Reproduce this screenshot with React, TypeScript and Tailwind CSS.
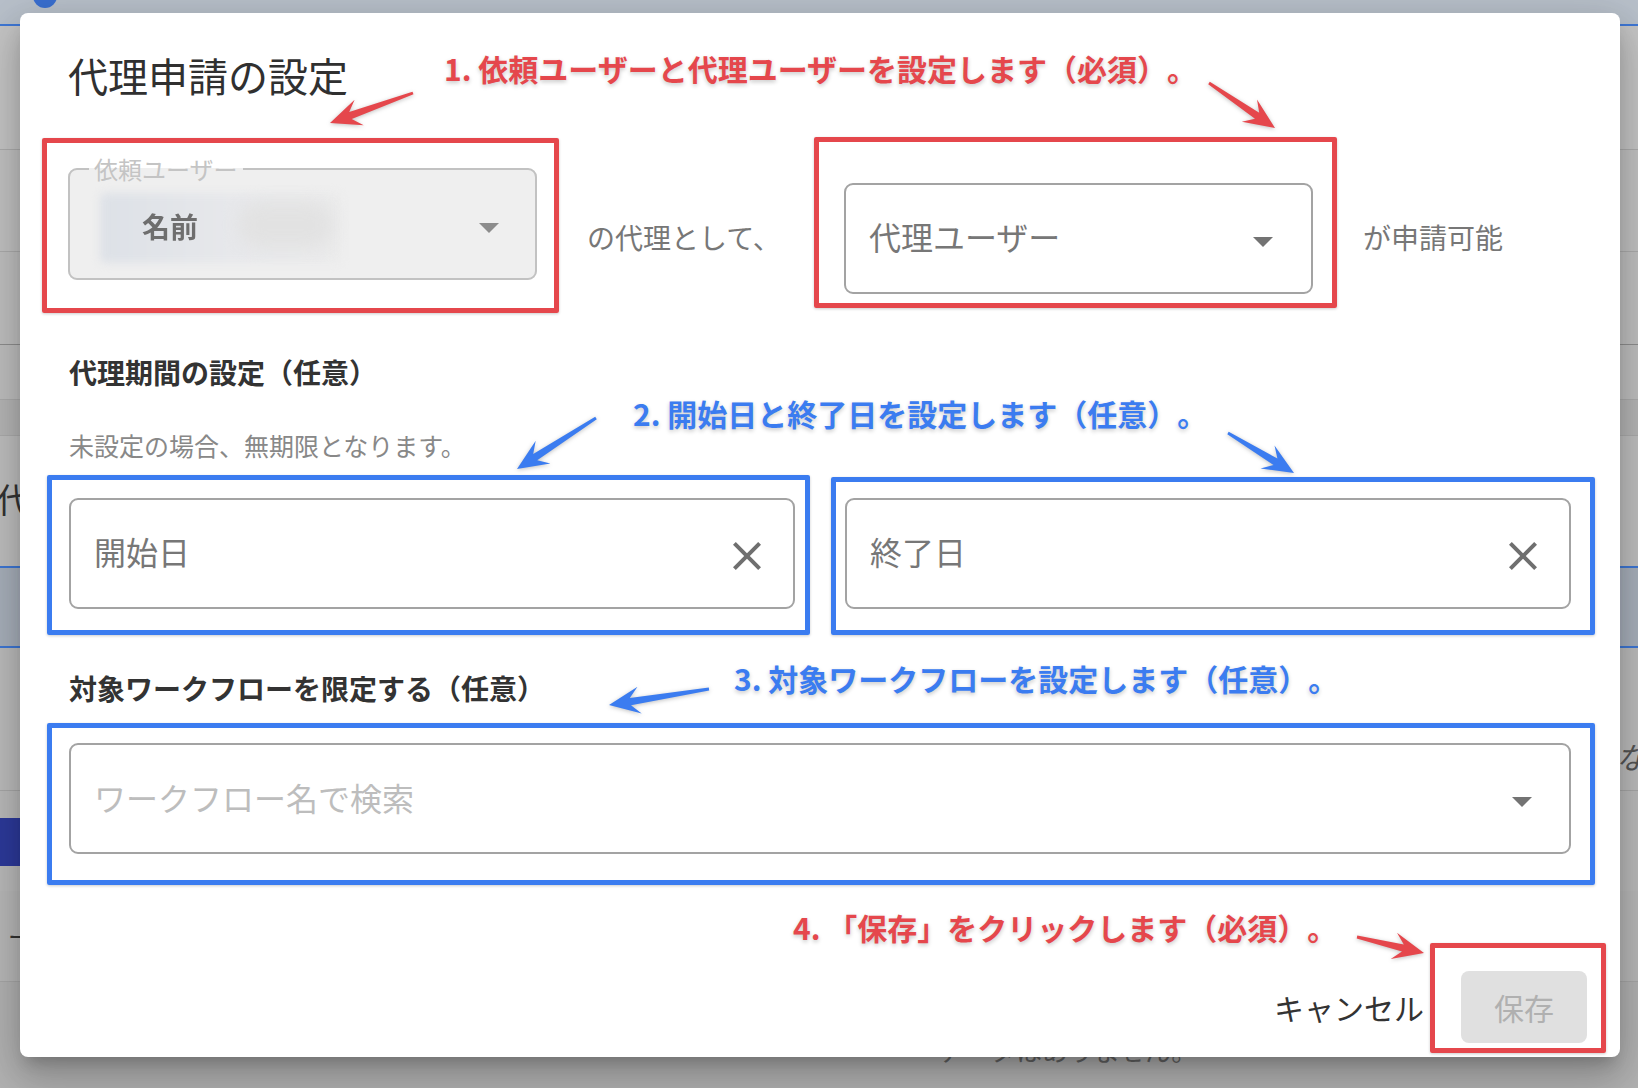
import React from "react";

function arrowPoints(x1: number, y1: number, x2: number, y2: number, headLen = 31, headHalf = 13.5, tailHalf = 1.4, neckHalf = 3.7) {
  const dx = x2 - x1, dy = y2 - y1;
  const L = Math.hypot(dx, dy);
  const ux = dx / L, uy = dy / L;
  const px = -uy, py = ux;
  const nb = headLen * 0.7;
  const nX = x2 - ux * nb, nY = y2 - uy * nb;
  const bX = x2 - ux * headLen, bY = y2 - uy * headLen;
  const pts = [
    [x1 + px * tailHalf, y1 + py * tailHalf],
    [nX + px * neckHalf, nY + py * neckHalf],
    [bX + px * headHalf, bY + py * headHalf],
    [x2, y2],
    [bX - px * headHalf, bY - py * headHalf],
    [nX - px * neckHalf, nY - py * neckHalf],
    [x1 - px * tailHalf, y1 - py * tailHalf],
  ];
  return pts.map((p) => p.map((v) => v.toFixed(1)).join(",")).join(" ");
}

const RED = "#e5474c";
const BLUE = "#3b7cf0";

function DropArrow({ color }: { color: string }) {
  return (
    <svg width="20" height="10" viewBox="0 0 20 10" className="shrink-0 mt-[6px]">
      <path d="M0 0h20L10 10z" fill={color} />
    </svg>
  );
}

function CloseIcon() {
  return (
    <svg width="48" height="48" viewBox="0 0 24 24" className="shrink-0 mt-[5px]">
      <path
        fill="#6f6f6f"
        d="M19 6.41L17.59 5 12 10.59 6.41 5 5 6.41 10.59 12 5 17.59 6.41 19 12 13.41 17.59 19 19 17.59 13.41 12z"
      />
    </svg>
  );
}

function RequesterSelect() {
  return (
    <div className="relative w-[469px] h-[111px] shrink-0">
      <fieldset className="absolute left-0 right-0 top-[-12px] bottom-0 m-0 rounded-[9px] border-2 border-[#c2c2c2] bg-[#efefef] px-[19px]">
        <legend className="px-[5px] text-[24px] leading-[24px] text-[#c4c4c4]">依頼ユーザー</legend>
      </fieldset>
      <div className="absolute left-[32px] top-[24px] w-[241px] h-[70px] rounded-[6px] bg-[linear-gradient(90deg,#dde1e7,#e7e8eb_55%,#ebebeb)] blur-[4px]" />
      <div className="absolute left-[170px] top-[34px] w-[95px] h-[44px] rounded-full bg-[#e2e2e2] blur-[8px]" />
      <div className="relative flex items-center h-full pl-[74px] pr-[38px]">
        <span className="flex-1 text-[28px] leading-[36px] font-bold text-[#6e6e6e] blur-[0.5px] mt-[3px]">名前</span>
        <DropArrow color="#8c8c8c" />
      </div>
    </div>
  );
}

function OutlinedField({ children, right, className }: { children: React.ReactNode; right: React.ReactNode; className?: string }) {
  return (
    <div className={"flex items-center h-[111px] rounded-[9px] border-2 border-[#a3a3a3] bg-white " + (className ?? "")}>
      {children}
      {right}
    </div>
  );
}

export default function App() {
  return (
    <div className="relative w-[1638px] h-[1088px] overflow-hidden bg-[#bdbdbd] font-['Noto_Sans_CJK_JP',sans-serif] [text-spacing-trim:space-all]">
      {/* background page (behind the modal backdrop) */}
      <div className="flex flex-col">
        <div className="relative h-[24px] bg-[#b8c0ca]">
          <div className="absolute left-[33px] top-[-16px] w-[24px] h-[24px] rounded-full bg-[#3a6fd0]" />
        </div>
        <div className="h-[2px] bg-[#3f78d6]" />
        <div className="h-[124px] bg-[#c6c6c6] border-b border-[#adadad]" />
        <div className="h-[102px] bg-[#c3c3c3] border-b border-[#adadad]" />
        <div className="h-[93px] bg-[#c1c1c1] border-b border-[#8f8f8f]" />
        <div className="h-[55px] bg-[#c0c0c0] border-b border-[#adadad]" />
        <div className="h-[36px] bg-[#b7b7b7] border-b border-[#adadad]" />
        <div className="h-[130px] bg-[#c0c0c0] flex items-center">
          <span className="ml-[-4px] text-[34px] text-[#333] mt-[-6px]">代理</span>
        </div>
        <div className="h-[82px] bg-[#a9b1bc] border-y-2 border-[#3f78d6]" />
        <div className="h-[143px] bg-[#bdbdbd] border-b border-[#a8a8a8] flex items-start justify-end">
          <span className="mr-[-8px] mt-[86px] text-[30px] italic text-[#555]">な</span>
        </div>
        <div className="h-[100px] bg-[#bbbbbb] flex items-start">
          <div className="mt-[27px] w-[40px] h-[48px] bg-[#2d3a9c]" />
        </div>
        <div className="h-[91px] bg-[#b9b9b9] border-b border-[#a8a8a8] flex items-center">
          <span className="ml-[8px] text-[24px] text-[#333]">ー</span>
        </div>
        <div className="h-[106px] bg-[#b3b3b3] flex items-start">
          <span className="ml-[938px] mt-[52px] text-[26px] leading-[32px] text-[#666]">データはありません。</span>
        </div>
      </div>

      {/* dialog */}
      <div className="absolute left-[20px] top-[13px] w-[1600px] h-[1044px] rounded-[8px] bg-white shadow-[0_11px_15px_-7px_rgba(0,0,0,0.2),0_24px_38px_3px_rgba(0,0,0,0.14),0_9px_46px_8px_rgba(0,0,0,0.12)] flex flex-col">
        <div className="pl-[48px] pt-[38px]">
          <h2 className="text-[40px] leading-[48px] font-normal text-[#303030]">代理申請の設定</h2>
        </div>

        <div className="flex items-start pl-[48px] mt-[70px] h-[124px]">
          <RequesterSelect />
          <span className="ml-[50px] w-[257px] shrink-0 mt-[48px] text-[28px] leading-[40px] text-[#777]">の代理として、</span>
          <div className="w-[469px] shrink-0 mt-[14px]">
            <OutlinedField className="h-[110px] pl-[23px] pr-[38px]" right={<DropArrow color="#737373" />}>
              <span className="flex-1 pb-[6px] text-[32px] leading-[40px] text-[#777]">代理ユーザー</span>
            </OutlinedField>
          </div>
          <span className="ml-[50px] mt-[48px] text-[28px] leading-[40px] text-[#777]">が申請可能</span>
        </div>

        <div className="pl-[49px] mt-[61px] text-[28px] leading-[36px] font-bold text-[#333]">代理期間の設定（任意）</div>
        <div className="pl-[49px] mt-[39px] text-[25px] leading-[32px] text-[#888]">未設定の場合、無期限となります。</div>

        <div className="px-[49px] mt-[37px] grid grid-cols-2 gap-[50px]">
          <OutlinedField className="pl-[23px] pr-[22px]" right={<CloseIcon />}>
            <span className="flex-1 pb-[6px] text-[32px] leading-[40px] text-[#777]">開始日</span>
          </OutlinedField>
          <OutlinedField className="pl-[23px] pr-[22px]" right={<CloseIcon />}>
            <span className="flex-1 pb-[6px] text-[32px] leading-[40px] text-[#777]">終了日</span>
          </OutlinedField>
        </div>

        <div className="pl-[49px] mt-[61px] text-[28px] leading-[36px] font-bold text-[#333]">対象ワークフローを限定する（任意）</div>

        <div className="px-[49px] mt-[37px]">
          <OutlinedField className="h-[110px] pl-[23px] pr-[37px]" right={<DropArrow color="#737373" />}>
            <span className="flex-1 pb-[4px] text-[32px] leading-[40px] text-[#bdbdbd]">ワークフロー名で検索</span>
          </OutlinedField>
        </div>

        <div className="mt-[117px] flex items-center justify-end pr-[33px]">
          <span className="h-[72px] px-[16px] mr-[21px] flex items-center text-[30px] leading-[40px] text-[#333]">キャンセル</span>
          <span className="w-[126px] h-[72px] rounded-[8px] bg-[#e0e0e0] flex items-center justify-center text-[30px] leading-[40px] text-[#b0b0b0]">保存</span>
        </div>

        {/* annotation layer */}
        <div className="absolute inset-0 pointer-events-none">
          <div className="absolute left-[22px] top-[125px] w-[517px] h-[175px] border-[5px] border-[#e5474c] rounded-[2px] shadow-[0_1px_3px_rgba(0,0,0,0.2)]" />
          <div className="absolute left-[794px] top-[124px] w-[523px] h-[171px] border-[5px] border-[#e5474c] rounded-[2px] shadow-[0_1px_3px_rgba(0,0,0,0.2)]" />
          <div className="absolute left-[27px] top-[462px] w-[763px] h-[160px] border-[5px] border-[#3b7cf0] rounded-[2px] shadow-[0_1px_3px_rgba(0,0,0,0.2)]" />
          <div className="absolute left-[811px] top-[464px] w-[764px] h-[158px] border-[5px] border-[#3b7cf0] rounded-[2px] shadow-[0_1px_3px_rgba(0,0,0,0.2)]" />
          <div className="absolute left-[27px] top-[710px] w-[1548px] h-[162px] border-[5px] border-[#3b7cf0] rounded-[2px] shadow-[0_1px_3px_rgba(0,0,0,0.2)]" />
          <div className="absolute left-[1410px] top-[930px] w-[176px] h-[110px] border-[5px] border-[#e5474c] rounded-[2px] shadow-[0_1px_3px_rgba(0,0,0,0.2)]" />

          <div className="absolute left-[424px] top-[37px] whitespace-nowrap text-[30px] leading-[36px] font-bold text-[#e5474c] [text-shadow:0_2px_4px_rgba(0,0,0,0.22)]">1. 依頼ユーザーと代理ユーザーを設定します（必須）。</div>
          <div className="absolute left-[613px] top-[382px] whitespace-nowrap text-[30px] leading-[36px] font-bold text-[#3b7cf0] [text-shadow:0_2px_4px_rgba(0,0,0,0.22)]">2. 開始日と終了日を設定します（任意）。</div>
          <div className="absolute left-[714px] top-[647px] whitespace-nowrap text-[30px] leading-[36px] font-bold text-[#3b7cf0] [text-shadow:0_2px_4px_rgba(0,0,0,0.22)]">3. 対象ワークフローを設定します（任意）。</div>
          <div className="absolute left-[773px] top-[896px] whitespace-nowrap text-[30px] leading-[36px] font-bold text-[#e5474c] [text-shadow:0_2px_4px_rgba(0,0,0,0.22)]">4. 「保存」をクリックします（必須）。</div>

          <svg width="1600" height="1044" className="absolute left-0 top-0 drop-shadow-[0_1px_2px_rgba(0,0,0,0.25)]">
            <polygon points={arrowPoints(393, 80, 310, 110)} fill={RED} />
            <polygon points={arrowPoints(1189, 70, 1255, 115)} fill={RED} />
            <polygon points={arrowPoints(576, 405, 497, 456)} fill={BLUE} />
            <polygon points={arrowPoints(1208, 420, 1274, 460)} fill={BLUE} />
            <polygon points={arrowPoints(689, 676, 589, 692)} fill={BLUE} />
            <polygon points={arrowPoints(1337, 924, 1404, 940)} fill={RED} />
          </svg>
        </div>
      </div>
    </div>
  );
}
